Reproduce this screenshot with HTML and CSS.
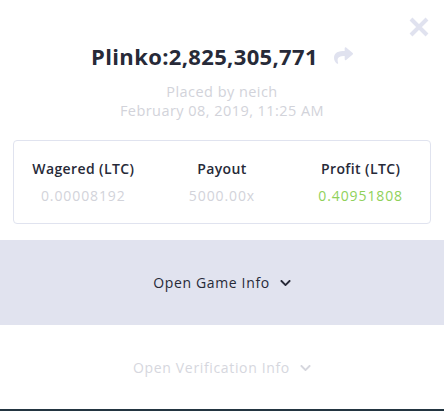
FILE: index.html
```html
<!DOCTYPE html>
<html>
<head>
<meta charset="utf-8">
<link rel="stylesheet" href="styles.css">
</head>
<body>
<div class="modal">
  <button class="close" aria-label="Close">
    <svg viewBox="0 0 20 20" width="20" height="20"><path d="M2 2L18 18M18 2L2 18" stroke="#e0e2ef" stroke-width="4" stroke-linecap="butt"/></svg>
  </button>
  <div class="head">
    <div class="title-row">
      <h1 class="title">Plinko:2,825,305,771</h1>
      <svg class="share" viewBox="0 0 512 512" width="19" height="19"><path fill="#e0e2ef" d="M503.691 189.836L327.687 37.851C312.281 24.546 288 35.347 288 56.015v80.053C127.371 137.907 0 170.1 0 322.326c0 61.441 39.581 122.309 83.333 154.132 13.653 9.931 33.111-2.533 28.077-18.631C66.066 312.814 132.917 274.316 288 272.085V360c0 20.7 24.3 31.453 39.687 18.164l176.004-152c11.071-9.562 11.086-26.753 0-36.328z"/></svg>
    </div>
    <div class="meta">
      <div>Placed by neich</div>
      <div>February 08, 2019, 11:25 AM</div>
    </div>
  </div>
  <div class="stats">
    <div class="stat">
      <div class="label">Wagered (LTC)</div>
      <div class="value">0.00008192</div>
    </div>
    <div class="stat">
      <div class="label">Payout</div>
      <div class="value">5000.00x</div>
    </div>
    <div class="stat">
      <div class="label">Profit (LTC)</div>
      <div class="value green">0.40951808</div>
    </div>
  </div>
  <div class="section game">
    <span>Open Game Info</span>
    <svg class="chev" viewBox="0 0 448 512" width="11" height="12"><path fill="currentColor" d="M207.029 381.476L12.686 187.132c-9.373-9.373-9.373-24.569 0-33.941l22.667-22.667c9.357-9.357 24.522-9.375 33.901-.04L224 284.505l154.745-154.021c9.379-9.335 24.544-9.317 33.901.04l22.667 22.667c9.373 9.373 9.373 24.569 0 33.941L240.971 381.476c-9.373 9.372-24.569 9.372-33.942 0z"/></svg>
  </div>
  <div class="section verify">
    <span>Open Verification Info</span>
    <svg class="chev" viewBox="0 0 448 512" width="11" height="12"><path fill="currentColor" d="M207.029 381.476L12.686 187.132c-9.373-9.373-9.373-24.569 0-33.941l22.667-22.667c9.357-9.357 24.522-9.375 33.901-.04L224 284.505l154.745-154.021c9.379-9.335 24.544-9.317 33.901.04l22.667 22.667c9.373 9.373 9.373 24.569 0 33.941L240.971 381.476c-9.373 9.372-24.569 9.372-33.942 0z"/></svg>
  </div>
</div>
</body>
</html>
```
FILE: styles.css
```css
* { box-sizing: border-box; }
html, body { margin: 0; padding: 0; }
body {
  background: #233541;
  font-family: "Open Sans", "Liberation Sans", sans-serif;
  height: 411px;
  overflow: hidden;
}
.modal {
  position: relative;
  background: #ffffff;
  height: 409px;
  display: flex;
  flex-direction: column;
}
.close {
  position: absolute;
  top: 17px;
  right: 15px;
  padding: 0;
  border: 0;
  background: none;
  width: 20px;
  height: 20px;
}
.close svg { display: block; }
.head {
  padding-top: 40px;
  text-align: center;
}
.title-row {
  height: 32px;
  display: flex;
  align-items: center;
  justify-content: center;
  gap: 16px;
}
.title {
  margin: 0;
  font-size: 22px;
  font-weight: 700;
  color: #272a38;
  letter-spacing: 0.35px;
}
.share { display: block; margin-top: -2px; }
.meta {
  margin-top: 10px;
  font-size: 14.5px;
  line-height: 19px;
  color: #d2d3da;
  letter-spacing: 0.45px;
}
.stats {
  margin: 20px 13px 0;
  height: 84px;
  border: 1px solid #e0e3ef;
  border-radius: 4px;
  display: grid;
  grid-template-columns: 1fr 1fr 1fr;
  align-content: center;
  text-align: center;
}
.label {
  font-size: 14px;
  font-weight: 600;
  color: #272a38;
  line-height: 20px;
  letter-spacing: 0.4px;
}
.value {
  margin-top: 7px;
  font-size: 14px;
  line-height: 20px;
  color: #d2d3da;
  letter-spacing: 0.9px;
}
.value.green { color: #8fd15a; }
.section {
  height: 85px;
  display: flex;
  align-items: center;
  justify-content: center;
  gap: 10px;
  font-size: 14px;
  letter-spacing: 0.65px;
}
.game {
  margin-top: 16px;
  background: #e1e3ef;
  color: #272a38;
}
.verify {
  color: #d6d7de;
  height: 84px;
}
.chev { display: block; margin-top: 1px; }
```
